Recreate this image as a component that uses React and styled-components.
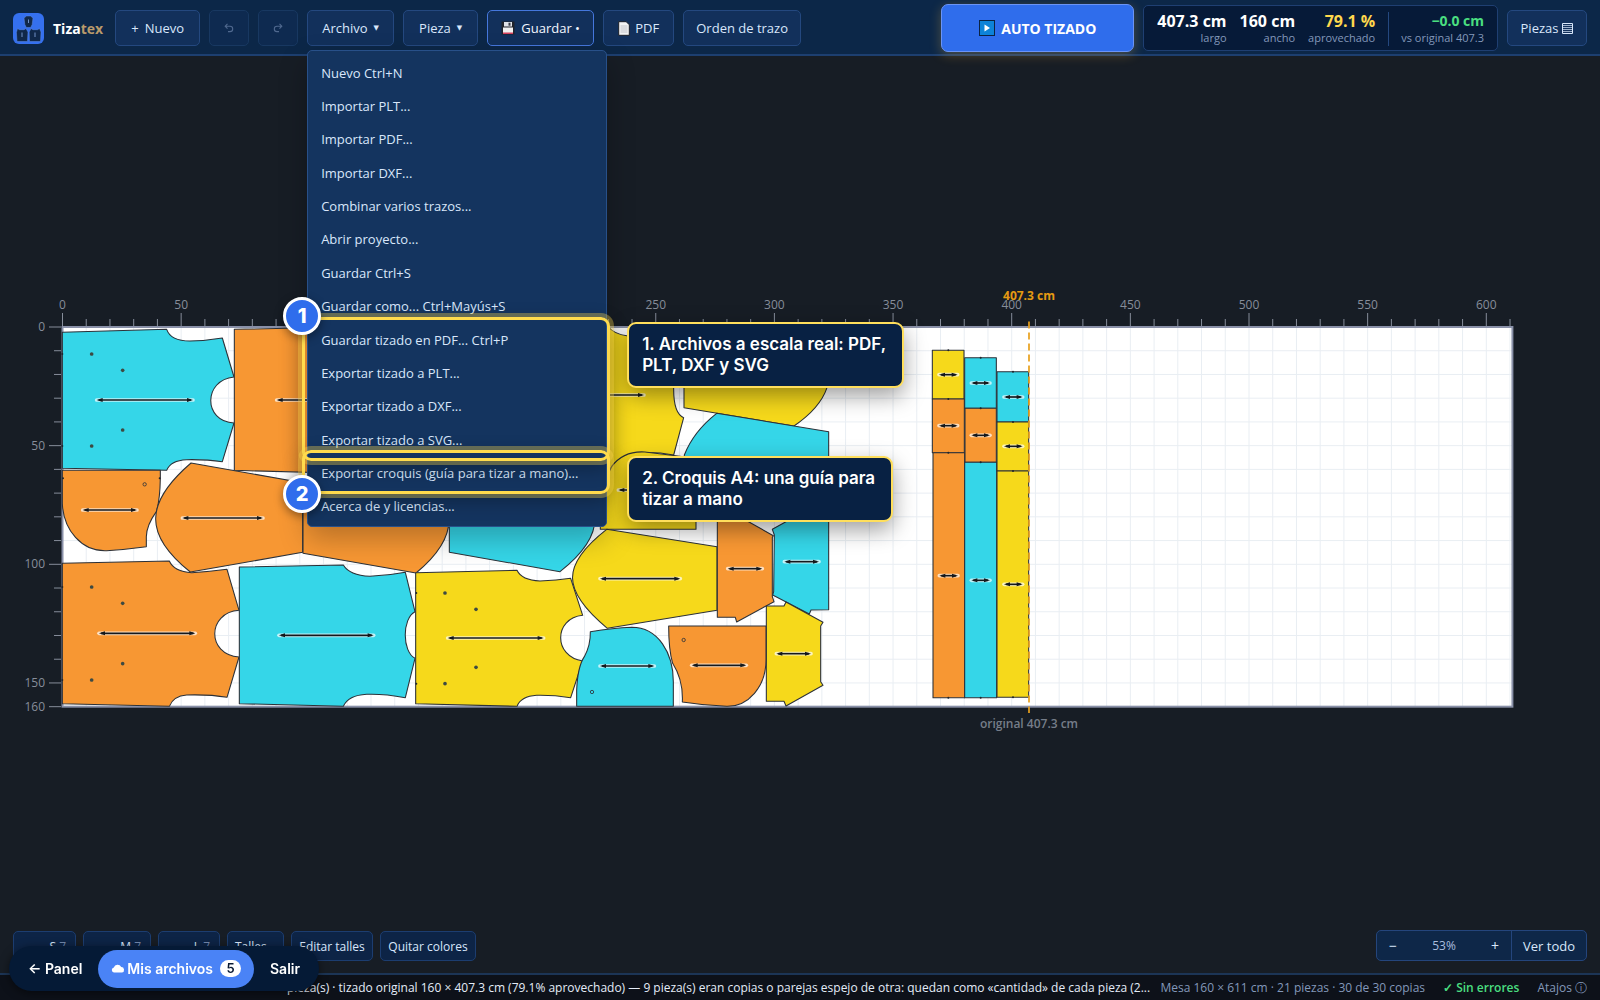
import React from "react";
import styled, { createGlobalStyle, css } from "styled-components";

const GlobalStyle = createGlobalStyle`
  * { box-sizing: border-box; }
  body { margin: 0; background: #171d25; font-family: "Open Sans", "Noto Sans", sans-serif; font-size: 13px; color: #d9e7fb; }
  button { font: inherit; color: inherit; cursor: pointer; }
`;

const Page = styled.div`
  height: 100vh;
  display: flex;
  flex-direction: column;
  overflow: hidden;
`;

/* ---------- top bar ---------- */
const TopBar = styled.header`
  height: 56px;
  flex: none;
  display: flex;
  align-items: center;
  gap: 9px;
  padding: 2px 13px 0;
  background: #0c2748;
  border-bottom: 2px solid #1d3f70;
  position: relative;
  z-index: 3;
`;
const Brand = styled.a`
  display: flex;
  align-items: center;
  gap: 9px;
  margin-right: 3px;
  color: #fff;
  font-size: 14px;
  font-weight: 700;
  text-decoration: none;
`;
const BrandAccent = styled.span`
  color: #b99a6b;
`;
const BarButton = styled.button`
  height: 36px;
  min-width: ${(p) => p.$width}px;
  padding: 0;
  display: inline-flex;
  align-items: center;
  justify-content: center;
  gap: ${(p) => p.$gap || 6}px;
  white-space: nowrap;
  border-radius: 5px;
  border: 1px solid ${(p) => (p.$active ? "#4577dc" : "#24487f")};
  background: #12305b;
  color: ${(p) => (p.$active ? "#f2f7ff" : "#d9e7fb")};
  &:disabled { color: #50698f; border-color: #183861; background: #0e2a50; }
`;
const Caret = styled.span`
  font-size: 7px;
  font-family: "DejaVu Sans", sans-serif;
`;
const Spacer = styled.div`
  flex: 1;
`;
const AutoButton = styled.button`
  height: 48px;
  width: 193px;
  display: flex;
  align-items: center;
  justify-content: center;
  gap: 6px;
  border: 1px solid #6b94f5;
  border-radius: 7px;
  background: #2f6dec;
  color: #fff;
  font-size: 14px;
  font-weight: 700;
  box-shadow: 0 3px 12px rgba(255, 190, 60, 0.28);
`;
const Stats = styled.dl`
  height: 46px;
  margin: 0;
  padding: 2px 13px 0;
  display: flex;
  align-items: center;
  gap: 13px;
  border: 1px solid #1f3f72;
  border-radius: 5px;
  background: #061a38;
`;
const Stat = styled.div`
  display: flex;
  flex-direction: column;
  align-items: flex-end;
  white-space: nowrap;
  ${(p) => p.$divided && css`
    border-left: 1px solid #24487f;
    padding-left: 12px;
  `}
`;
const StatValue = styled.dd`
  margin: 0;
  font-size: ${(p) => (p.$small ? 14 : 16)}px;
  line-height: 18px;
  font-weight: 700;
  color: ${(p) => p.$color || "#fff"};
`;
const StatLabel = styled.dt`
  order: 2;
  font-size: 11px;
  line-height: 16px;
  color: #8398ba;
`;

/* ---------- menu ---------- */
const MenuAnchor = styled.div`
  position: relative;
`;
const Menu = styled.div`
  position: absolute;
  top: calc(100% + 4px);
  left: 0;
  width: 300px;
  min-height: 477px;
  padding: 5px 0 3px;
  display: flex;
  flex-direction: column;
  background: #14345f;
  border: 1px solid #285089;
  border-radius: 5px;
  box-shadow: 0 12px 28px rgba(0, 0, 0, 0.25);
`;
const MenuItem = styled.button`
  flex: 1;
  padding: 0 13px;
  border: 0;
  background: none;
  text-align: left;
  white-space: nowrap;
`;
const Frame = styled.div`
  position: absolute;
  left: -5px;
  top: ${(p) => p.$top}px;
  width: 308px;
  height: ${(p) => p.$height}px;
  border: 3px solid #ffdb4d;
  border-radius: 9px;
  pointer-events: none;
  box-shadow: 0 0 0 4px rgba(255, 219, 77, 0.35), 0 6px 20px rgba(0, 0, 0, 0.32);
`;
const StepBadge = styled.span`
  position: absolute;
  left: -24px;
  top: ${(p) => p.$top}px;
  width: 38px;
  height: 38px;
  display: grid;
  place-items: center;
  border: 3px solid #fff;
  border-radius: 50%;
  background: #2f6dec;
  color: #fff;
  font: 800 20px "Inter", sans-serif;
  box-shadow: 0 3px 10px rgba(0, 0, 0, 0.4);
`;
const Callout = styled.div`
  position: absolute;
  left: 320px;
  top: ${(p) => p.$top}px;
  width: ${(p) => p.$width}px;
  padding: 10px 13px;
  border: 2px solid #ffdf5c;
  border-radius: 9px;
  background: #082143;
  color: #fff;
  font: 600 17px/21px "Inter", sans-serif;
  box-shadow: 0 8px 22px rgba(0, 0, 0, 0.38);
`;

/* ---------- stage ---------- */
const Stage = styled.main`
  flex: 1;
  min-height: 0;
  position: relative;
  background: #171d25;
`;
const Drawing = styled.svg`
  display: block;
  width: 100%;
  height: 100%;
  font-family: "Open Sans", sans-serif;
  font-size: 12px;
`;
const StageTools = styled.div`
  position: absolute;
  left: 13px;
  right: 13px;
  bottom: 12px;
  display: flex;
  justify-content: space-between;
  align-items: flex-end;
`;
const Chips = styled.div`
  display: flex;
  gap: 7px;
`;
const Chip = styled.button`
  height: 30px;
  min-width: ${(p) => p.$width}px;
  padding: 0 ${(p) => (p.$end ? 9 : 0)}px;
  text-align: ${(p) => (p.$end ? "right" : "center")};
  white-space: nowrap;
  font-size: 12px;
  border: 1px solid #1c3d70;
  border-radius: 5px;
  background: #0d2446;
`;
const ChipCount = styled.span`
  color: #7389ad;
`;
const ZoomBox = styled.div`
  height: 31px;
  display: flex;
  align-items: stretch;
  border: 1px solid #24457c;
  border-radius: 5px;
  background: #0e2748;
`;
const ZoomButton = styled.button`
  width: ${(p) => p.$width}px;
  padding: 0;
  border: 0;
  background: none;
  font-size: ${(p) => (p.$text ? 13 : 14)}px;
  ${(p) => p.$text && css`border-left: 1px solid #24457c;`}
`;
const ZoomValue = styled.output`
  width: 70px;
  text-align: center;
  align-self: center;
  font-size: 12px;
  color: #a9bedf;
`;

/* ---------- footer ---------- */
const StatusBar = styled.footer`
  height: 27px;
  flex: none;
  display: flex;
  align-items: center;
  gap: 18px;
  padding: 0 13px;
  border-top: 2px solid #1c3556;
  background: #0d1119;
  font-size: 12px;
  white-space: nowrap;
  color: #8398ba;
`;
const Message = styled.p`
  margin: 0 -12px 0 0;
  padding-left: 274px;
  flex: 1;
  min-width: 0;
  overflow: hidden;
  text-overflow: ellipsis;
  color: #e4ecf8;
`;
const Ok = styled.strong`
  font-weight: 600;
  color: #4ade80;
`;
const HelpLink = styled.a`
  color: inherit;
  text-decoration: none;
`;
const Dock = styled.nav`
  position: fixed;
  left: 9px;
  bottom: 9px;
  z-index: 4;
  height: 45px;
  padding: 0 3px;
  display: flex;
  align-items: center;
  border-radius: 23px;
  background: #051a36;
  color: #fff;
  font: 600 14px "Inter", sans-serif;
  box-shadow: 0 2px 10px rgba(0, 0, 0, 0.5);
`;
const DockLink = styled.a`
  height: 38px;
  padding: 0 ${(p) => (p.$primary ? 13 : 16)}px;
  display: flex;
  align-items: center;
  gap: 2px;
  border-radius: 19px;
  background: ${(p) => (p.$primary ? "#4a83f6" : "transparent")};
  color: inherit;
  text-decoration: none;
`;
const DockCount = styled.span`
  min-width: 21px;
  margin-left: 5px;
  line-height: 17px;
  border-radius: 9px;
  text-align: center;
  font-size: 13px;
  background: #fff;
  color: #0a1a33;
`;

/* ---------- icons ---------- */
const Logo = () => (
  <svg width="31" height="31" viewBox="0 0 31 31" aria-hidden="true">
    <rect width="31" height="31" rx="6" fill="#3570ee" />
    <g fill="#10284a" stroke="#5c8be8" strokeWidth=".5">
      <path d="M13.500 3h4l2.500 2-.8 6.500-1.500 3h-4.400l-1.500-3L11 5z" />
      <path d="M4.500 15.500l2 1.200h4.500l2-1.200 2 3.500-.5 9.500H4l-.6-9z" />
      <path d="M18 15.500l2 1.200h4.500l2-1.200 1.500 3.500-.5 9.500H16.500l-.3-9.500z" />
    </g>
    <path d="M15.500 6.500v3.500M9 19.500v4.500M22 19.500v4.500" stroke="#7d9dd6" strokeWidth=".9" />
  </svg>
);
const TurnIcon = ({ flip }) => (
  <svg width="10" height="10" viewBox="0 0 10 10" fill="none" stroke="currentColor" strokeWidth="1.1" transform={flip ? "scale(-1 1)" : undefined} aria-hidden="true">
    <path d="M3.500 .8L1.200 3.200l2.300 2.400M1.400 3.200H6a2.700 2.700 0 1 1 0 5.400H4" />
  </svg>
);
const FloppyIcon = () => (
  <svg width="14" height="14" viewBox="0 0 14 14" aria-hidden="true">
    <path d="M1 .5h12.500v13H.5V1z" fill="#20232b" />
    <rect x="3" y="1" width="8" height="4.500" fill="#dfe2e8" />
    <rect x="7.500" y="1.700" width="2" height="3" fill="#3a3d46" />
    <rect x="2" y="6.500" width="10" height="6.500" fill="#f1f1f1" />
    <rect x="2" y="11.500" width="10" height="1.500" fill="#d4405c" />
  </svg>
);
const SheetIcon = () => (
  <svg width="12" height="15" viewBox="0 0 12 15" aria-hidden="true">
    <path d="M.7.7h7.500l3.100 3.100v10.500H.7z" fill="#f4f4f4" stroke="#1b1f27" strokeWidth="1" />
    <path d="M2.500 5h7M2.500 7h7M2.500 9h7M2.500 11h7" stroke="#b5b8be" strokeWidth=".8" />
  </svg>
);
const PlayIcon = () => (
  <svg width="16" height="16" viewBox="0 0 16 16" aria-hidden="true">
    <rect x=".5" y=".5" width="15" height="15" fill="#0d83d8" stroke="#0b2343" />
    <path d="M5.500 4.500v7l5.500-3.500z" fill="#fff" />
  </svg>
);
const RowsIcon = () => (
  <svg width="11" height="11" viewBox="0 0 11 11" fill="none" stroke="#d9e7fb" aria-hidden="true">
    <path d="M.5.5h10v10H.5z" />
    <path d="M.5 2.500h10M.5 4.500h10M.5 6.500h10M.5 8.500h10" strokeOpacity=".7" />
  </svg>
);
const CloudIcon = () => (
  <svg width="14" height="10" viewBox="0 0 14 10" aria-hidden="true">
    <path d="M3 8.500a2.600 2.600 0 0 1-.2-5.100A4 4 0 0 1 10.200 3a2.800 2.800 0 0 1 .8 5.500z" fill="#fff" />
  </svg>
);

/* ---------- marker drawing: three units per screen pixel ---------- */
const C = "#35d6e8";
const O = "#f79733";
const Y = "#f6d91b";

const shapes = [
  [C, "M187 127L500 118Q512 153 570 153Q620 152 667 144L702 261C609 270 609 395 702 399L667 515Q620 508 560 509Q512 511 500 541L187 535Z"],
  [O, "M703 118L1000 112V549L703 541Z"],
  [O, "M187 541H481V565Q480 630 469 665Q440 705 439 740V770Q380 778 320 782C245 785 190 720 187 640Z"],
  [O, "M573 519L908 578V787L571 846C432 735 432 640 573 519Z"],
  [O, "M187 820L508 813Q522 845 575 848Q630 845 681 838L717 961C620 968 620 1095 717 1101L681 1222Q630 1213 560 1215Q520 1218 508 1249L187 1241Z"],
  [C, "M718 831L1030 825Q1048 856 1110 859Q1165 857 1216 847L1245 965C1206 985 1206 1085 1245 1105L1216 1223Q1150 1211 1100 1213Q1045 1216 1030 1249L718 1241Z"],
  [O, "M909 560V790L1248 849C1380 740 1380 640 1248 530Z"],
  [C, "M1348 600V787L1680 845C1820 735 1820 640 1680 520Z"],
  [Y, "M1247 848L1551 841Q1565 871 1620 873Q1670 871 1712 865L1748 976C1660 985 1660 1100 1748 1113L1712 1223Q1660 1215 1610 1216Q1563 1219 1551 1249L1247 1241Z"],
  [Y, "M1500 112L1822 108Q1845 134 1880 137L2021 130V293Q2020 370 2051 383L2021 495Q1880 470 1835 530L1820 560H1500Z"],
  [Y, "M1801 718H2088V505L1935 486Q1870 482 1835 530L1820 560L1801 600Z"],
  [Y, "M1820 718L2151 770V961L1822 1015C1683 900 1683 825 1820 718Z"],
  [Y, "M2052 180V353L2382 408Q2460 355 2481 293L2470 180Z"],
  [C, "M2150 370L2486 425V600H2053V495Q2080 425 2150 370Z"],
  [O, "M2152 660V982H2206L2210 996L2322 935L2317 920V742L2320 737L2200 670Z"],
  [C, "M2400 672L2317 718L2323 735L2321 905L2318 915L2428 972L2433 960L2486 959V640Z"],
  [Y, "M2299 948H2352L2358 936L2469 997L2462 1008V1175L2469 1186L2358 1248L2352 1234H2299Z"],
  [C, "M1771 1025Q1840 1014 1895 1012C1975 1012 2020 1090 2020 1175V1249H1730V1200Q1733 1130 1753 1100Q1772 1065 1771 1025Z"],
  [O, "M2006 1008H2298V1110C2298 1190 2245 1250 2180 1249Q2110 1246 2047 1236Q2050 1170 2018 1120Q2006 1080 2006 1008Z"],
  [Y, "M2797 181H2892V327H2797Z"],
  [O, "M2797 327H2893V488H2797Z"],
  [O, "M2799 488H2894V1223H2799Z"],
  [C, "M2894 203H2989V355H2894Z"],
  [O, "M2895 355H2989V517H2895Z"],
  [C, "M2894 517H2990V1223H2894Z"],
  [C, "M2991 245H3086V396H2991Z"],
  [Y, "M2991 396H3086V543H2991Z"],
  [Y, "M2991 543H3086V1222H2991Z"],
];

const arrows = [
  [290, 579, 330], [830, 1100, 330], [248, 411, 660], [547, 789, 684], [297, 586, 1030],
  [837, 1121, 1036], [1343, 1631, 1044], [1650, 1932, 315], [1855, 2010, 600], [1800, 2041, 866],
  [2183, 2287, 836], [2353, 2457, 815], [2329, 2433, 1091], [1800, 1963, 1128], [2075, 2239, 1126],
  [2817, 2873, 254], [2817, 2873, 407], [2818, 2874, 857], [2914, 2970, 279], [2914, 2970, 436],
  [2914, 2970, 871], [3012, 3068, 321], [3012, 3068, 469], [3012, 3068, 883],
];
const drills = [
  [275, 192], [368, 241], [368, 420], [275, 468], [275, 891], [368, 940], [368, 1121], [275, 1170],
  [1335, 909], [1428, 958], [1428, 1132], [1335, 1181],
];
const rings = [[434, 583], [1776, 1206], [2051, 1050]];
const notches = [
  [2845, 181], [2845, 327], [2845, 488], [2845, 1223], [2942, 203], [2942, 355], [2942, 517],
  [2942, 1223], [3039, 245], [3039, 396], [3039, 543], [3039, 1222],
  [187, 192], [187, 468], [187, 891], [187, 1170], [1249, 909], [1249, 1181], [189, 565], [479, 565],
];

const SCALE = 2.373;
const X0 = 62.5;
const Y0 = 327;
const W = 611 * SCALE;
const H = 160 * SCALE;
const range = (max, step) => Array.from({ length: Math.floor(max / step) + 1 }, (_, i) => i * step);

const Marker = () => (
  <Drawing viewBox="0 56 1600 917" preserveAspectRatio="xMinYMid meet" role="img" aria-label="Mesa de tizado">
    <rect x={X0} y={Y0} width={W} height={H} fill="#fff" />
    <g stroke="#e9eef3">
      {range(610, 10).map((v) => <path key={v} d={`M${X0 + v * SCALE} ${Y0}v${H}`} />)}
      {range(150, 10).map((v) => <path key={v} d={`M${X0} ${Y0 + v * SCALE}h${W}`} />)}
    </g>
    <rect x={X0} y={Y0} width={W} height={H} fill="none" stroke="#8990a8" strokeWidth="2" />
    <g stroke="#868d9a">
      {range(610, 10).map((v) => <path key={v} d={`M${X0 + v * SCALE} ${v % 50 ? 319 : 313}V326`} />)}
      {range(160, 10).map((v) => <path key={v} d={`M${v % 50 && v !== 160 ? 54 : 49} ${Y0 + v * SCALE}H61`} />)}
    </g>
    <g fill="#868d9a">
      {range(600, 50).map((v) => <text key={v} x={X0 + v * SCALE} y="309" textAnchor="middle">{v}</text>)}
      {[0, 50, 100, 150, 160].map((v) => <text key={v} x="45" y={Y0 + v * SCALE + 4} textAnchor="end">{v}</text>)}
    </g>
    <g transform="translate(0 290) scale(.333333)">
      {shapes.map(([fill, d]) => <path key={d} d={d} fill={fill} stroke="#2c3138" strokeWidth="3.200" strokeLinejoin="round" />)}
      {notches.map(([x, y]) => <circle key={`${x}-${y}`} cx={x} cy={y} r="3" fill="#20252b" />)}
      {drills.map(([x, y]) => <circle key={`${x}-${y}`} cx={x} cy={y} r="5.500" fill="#3d4a42" />)}
      {rings.map(([x, y]) => <circle key={`${x}-${y}`} cx={x} cy={y} r="5" fill="none" stroke="#2c3138" strokeWidth="2.500" />)}
      {arrows.map(([a, b, y]) => (
        <g key={`${a}-${y}`}>
          <path d={`M${a} ${y}H${b}`} stroke="#fff" strokeOpacity=".7" strokeWidth="11" strokeLinecap="round" />
          <path d={`M${a + 6} ${y}H${b - 6}`} stroke="#14181c" strokeWidth="5" />
          <path d={`M${a} ${y}l18 -6v12zM${b} ${y}l-18 -6v12z`} fill="#14181c" />
        </g>
      ))}
    </g>
    <path d="M1029 321.500V713" stroke="#e8a01c" strokeWidth="1.700" strokeDasharray="7 4" />
    <text x="1029" y="299.500" textAnchor="middle" fontWeight="700" fill="#e59a12">407.3 cm</text>
    <text x="1029" y="728" textAnchor="middle" fontWeight="600" fill="#767d89">original 407.3 cm</text>
  </Drawing>
);

const menuItems = [
  "Nuevo Ctrl+N", "Importar PLT...", "Importar PDF...", "Importar DXF...", "Combinar varios trazos...",
  "Abrir proyecto...", "Guardar Ctrl+S", "Guardar como... Ctrl+Mayús+S", "Guardar tizado en PDF... Ctrl+P",
  "Exportar tizado a PLT...", "Exportar tizado a DXF...", "Exportar tizado a SVG...",
  "Exportar croquis (guía para tizar a mano)...", "Acerca de y licencias...",
];

export default function App() {
  return (
    <Page>
      <GlobalStyle />
      <TopBar>
        <Brand href="#"><Logo /><span>Tiza<BrandAccent>tex</BrandAccent></span></Brand>
        <BarButton $width={85}><span>+</span>Nuevo</BarButton>
        <BarButton $width={40} disabled aria-label="Deshacer"><TurnIcon /></BarButton>
        <BarButton $width={40} disabled aria-label="Rehacer"><TurnIcon flip /></BarButton>
        <MenuAnchor>
          <BarButton $width={87} aria-expanded="true">Archivo<Caret>▼</Caret></BarButton>
          <Menu>
            {menuItems.map((t) => <MenuItem key={t}>{t}</MenuItem>)}
          </Menu>
          <Frame $top={307} $height={144} />
          <Frame $top={440} $height={44} />
          <StepBadge $top={287}>1</StepBadge>
          <StepBadge $top={465}>2</StepBadge>
          <Callout $top={312} $width={277}>1. Archivos a escala real: PDF, PLT, DXF y SVG</Callout>
          <Callout $top={446} $width={266}>2. Croquis A4: una guía para tizar a mano</Callout>
        </MenuAnchor>
        <BarButton $width={75}>Pieza<Caret>▼</Caret></BarButton>
        <BarButton $width={107} $active><FloppyIcon />Guardar •</BarButton>
        <BarButton $width={71} $gap={5}><SheetIcon />PDF</BarButton>
        <BarButton $width={118}>Orden de trazo</BarButton>
        <Spacer />
        <AutoButton><PlayIcon />AUTO TIZADO</AutoButton>
        <Stats>
          <Stat><StatLabel>largo</StatLabel><StatValue>407.3 cm</StatValue></Stat>
          <Stat><StatLabel>ancho</StatLabel><StatValue>160 cm</StatValue></Stat>
          <Stat><StatLabel>aprovechado</StatLabel><StatValue $color="#ffd84d">79.1 %</StatValue></Stat>
          <Stat $divided><StatLabel>vs original 407.3</StatLabel><StatValue $small $color="#4ade80">−0.0 cm</StatValue></Stat>
        </Stats>
        <BarButton $width={80} $gap={4}>Piezas<RowsIcon /></BarButton>
      </TopBar>
      <Stage>
        <Marker />
        <StageTools>
          <Chips>
            <Chip $width={63} $end>S <ChipCount>7</ChipCount></Chip>
            <Chip $width={68} $end>M <ChipCount>7</ChipCount></Chip>
            <Chip $width={62} $end>L <ChipCount>7</ChipCount></Chip>
            <Chip $width={57}>Talles...</Chip>
            <Chip $width={82}>Editar talles</Chip>
            <Chip $width={96}>Quitar colores</Chip>
          </Chips>
          <ZoomBox>
            <ZoomButton $width={32} aria-label="Alejar">−</ZoomButton>
            <ZoomValue>53%</ZoomValue>
            <ZoomButton $width={32} aria-label="Acercar">+</ZoomButton>
            <ZoomButton $width={75} $text>Ver todo</ZoomButton>
          </ZoomBox>
        </StageTools>
      </Stage>
      <StatusBar>
        <Message>pieza(s) · tizado original 160 × 407.3 cm (79.1% aprovechado) — 9 pieza(s) eran copias o parejas espejo de otra: quedan como «cantidad» de cada pieza (2...</Message>
        <span>Mesa 160 × 611 cm · 21 piezas · 30 de 30 copias</span>
        <Ok>✓ Sin errores</Ok>
        <HelpLink href="#">Atajos ⓘ</HelpLink>
      </StatusBar>
      <Dock>
        <DockLink href="#">← Panel</DockLink>
        <DockLink href="#" $primary><CloudIcon />Mis archivos<DockCount>5</DockCount></DockLink>
        <DockLink href="#">Salir</DockLink>
      </Dock>
    </Page>
  );
}
